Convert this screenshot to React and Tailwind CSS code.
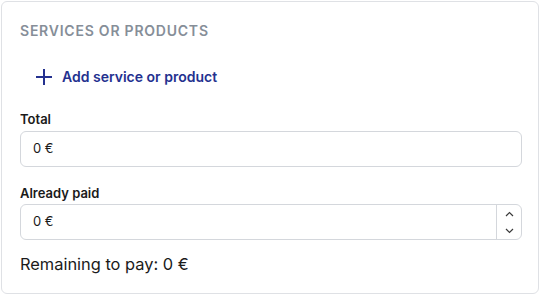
import { useState } from "react";

const App = () => {
	const [paid, setPaid] = useState("0 €");

	return (
		<div className="p-px bg-white" style={{ fontFamily: "Inter, 'Noto Sans', sans-serif" }}>
			<div className="w-[538px] h-[293px] bg-white border border-[#dfe1e5] rounded-md px-[18px] pt-[20px]">
				{/* Section title */}
				<h2 className="text-[14px] font-semibold tracking-[0.055em] text-[#868e98] leading-[18px]">
					SERVICES OR PRODUCTS
				</h2>

				{/* Add button */}
				<button
					type="button"
					className="mt-[28px] ml-[16px] flex items-center gap-[10px] text-[14px] font-semibold text-[#24318f] leading-[18px]"
				>
					<svg width="16" height="16" viewBox="0 0 16 16" fill="none" stroke="currentColor" strokeWidth="2">
						<path d="M8 0v16M0 8h16" />
					</svg>
					Add service or product
				</button>

				{/* Total */}
				<div className="mt-[23px]">
					<label className="block text-[13px] font-semibold text-[#1a1a1a] leading-[20px]">Total</label>
					<div className="mt-[2px] h-[36px] w-[502px] border border-[#d4d7dc] rounded-md flex items-center px-[12px] text-[13px] text-[#1a1a1a]">
						0 €
					</div>
				</div>

				{/* Already paid */}
				<div className="mt-[15px]">
					<label className="block text-[13px] font-semibold text-[#1a1a1a] leading-[22px]">Already paid</label>
					<div className="h-[36px] w-[502px] border border-[#d4d7dc] rounded-md flex items-stretch text-[13px] text-[#1a1a1a]">
						<input
							value={paid}
							onChange={(e) => setPaid(e.target.value)}
							className="flex-1 min-w-0 px-[12px] bg-transparent focus:outline-none"
						/>
						<div className="w-[25px] border-l border-[#d4d7dc] flex flex-col items-center justify-center gap-[11px] text-[#3a3a3a]">
							<svg width="9" height="6" viewBox="0 0 9 6" fill="none" stroke="currentColor" strokeWidth="1.2">
								<path d="M1 5l3.5-3.5L8 5" />
							</svg>
							<svg width="9" height="6" viewBox="0 0 9 6" fill="none" stroke="currentColor" strokeWidth="1.2">
								<path d="M1 1l3.5 3.5L8 1" />
							</svg>
						</div>
					</div>
				</div>

				{/* Remaining */}
				<p className="mt-[13px] text-[16.4px] text-[#1a1a1a] leading-[22px]">Remaining to pay: 0 €</p>
			</div>
		</div>
	);
};

export default App;
